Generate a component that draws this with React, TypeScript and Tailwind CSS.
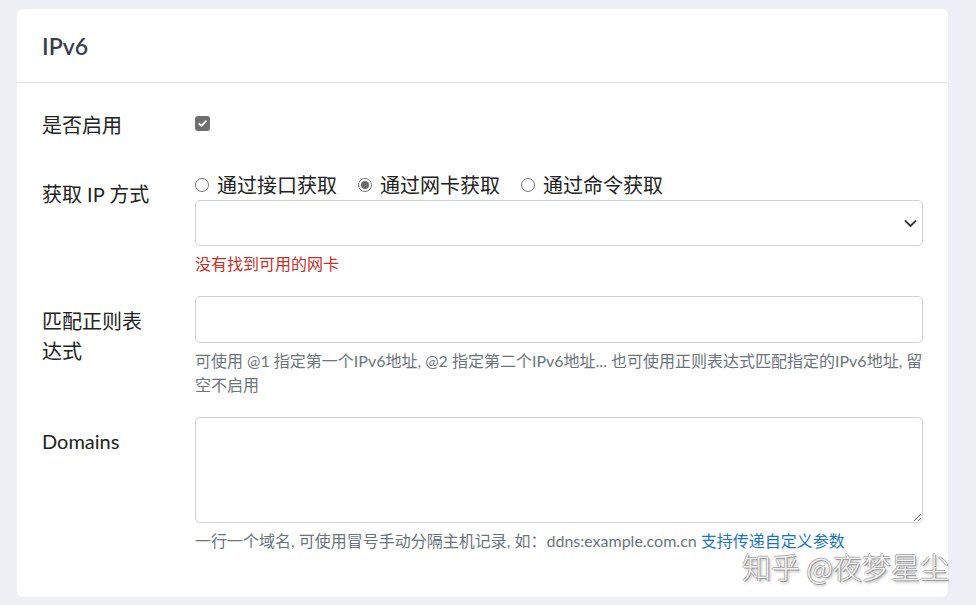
import React from "react";

const FONT = "font-['Lato','Noto_Sans_CJK_SC',sans-serif]";

function Radio({ checked, label }: { checked?: boolean; label: string }) {
  return (
    <label className="flex items-center gap-[8px]">
      <span className="w-[14px] h-[14px] rounded-full border border-[#777] bg-white flex items-center justify-center">
        {checked && <span className="w-[8px] h-[8px] rounded-full bg-[#6b6b6b]" />}
      </span>
      <span className="text-[20px] leading-[24px] text-[#222]">{label}</span>
    </label>
  );
}

export default function App() {
  return (
    <div className={`min-h-[605px] w-[976px] bg-[#eef0f5] pt-[9px] pl-[17px] relative overflow-hidden ${FONT}`}>
      <div className="w-[931px] bg-white rounded-[6px]">
        <div className="h-[74px] flex items-center px-[25px] border-b border-[#e5e6ea]">
          <h2 className="text-[23px] font-semibold text-[#3a3e4f] leading-none mt-[2px]">IPv6</h2>
        </div>
        <div className="px-[25px] pt-[27px] pb-[44px] flex flex-col">
          {/* Row 1 */}
          <div className="flex">
            <div className="w-[153px] text-[20px] leading-[30px] text-[#222]">是否启用</div>
            <div className="pt-[6px]">
              <span className="w-[15px] h-[15px] rounded-[3px] bg-[#6f6f6f] flex items-center justify-center">
                <svg width="11" height="11" viewBox="0 0 12 12">
                  <path d="M2.5 6.3 L5 8.7 L9.7 3.5" stroke="white" strokeWidth="2" fill="none" strokeLinecap="round" strokeLinejoin="round" />
                </svg>
              </span>
            </div>
          </div>
          {/* Row 2 */}
          <div className="flex mt-[33px]">
            <div className="w-[153px] pt-[6px] text-[20px] leading-[30px] text-[#222]">获取 IP 方式</div>
            <div className="flex-1 flex flex-col">
              <div className="flex items-center gap-[21px] h-[24px]">
                <Radio label="通过接口获取" />
                <Radio checked label="通过网卡获取" />
                <Radio label="通过命令获取" />
              </div>
              <div className="mt-[3px] h-[46px] border border-[#cfd1d4] rounded-[5px] flex items-center justify-end pr-[5px]">
                <svg width="13" height="9" viewBox="0 0 13 9">
                  <path d="M1.5 2 L6.5 7 L11.5 2" stroke="#343a40" strokeWidth="1.8" fill="none" strokeLinecap="round" strokeLinejoin="round" />
                </svg>
              </div>
              <div className="mt-[6px] text-[16px] leading-[24px] text-[#c4302b]">没有找到可用的网卡</div>
            </div>
          </div>
          {/* Row 3 */}
          <div className="flex mt-[20px]">
            <div className="w-[153px] pt-[10px] pr-[40px] text-[20px] leading-[30px] text-[#222]">匹配正则表达式</div>
            <div className="flex-1 flex flex-col">
              <input className="h-[47px] border border-[#cfd1d4] rounded-[5px] outline-none" />
              <div className="mt-[6px] text-[16px] leading-[24px] text-[#6c757d]">
                可使用 @1 指定第一个IPv6地址, @2 指定第二个IPv6地址... 也可使用正则表达式匹配指定的IPv6地址, 留
                <br />
                空不启用
              </div>
            </div>
          </div>
          {/* Row 4 */}
          <div className="flex mt-[20px]">
            <div className="w-[153px] pt-[9px] text-[20px] leading-[30px] text-[#222]">Domains</div>
            <div className="flex-1 flex flex-col">
              <textarea className="h-[106px] border border-[#cfd1d4] rounded-[5px] outline-none resize-y block" />
              <div className="mt-[6px] text-[16px] leading-[24px] text-[#6c757d] whitespace-nowrap">
                一行一个域名, 可使用冒号手动分隔主机记录, 如：ddns:example.com.cn{" "}
                <a className="text-[#1a76bd]">支持传递自定义参数</a>
              </div>
            </div>
          </div>
        </div>
      </div>
      <div className="absolute left-[742px] top-[552px] text-[29px] leading-[28px] font-light text-[#f2f2f2] font-['Noto_Sans_CJK_SC',sans-serif] [text-shadow:1px_1px_0_#9a9a9a,-1px_0_0_#b0b0b0,0_-1px_0_#b0b0b0,2px_2px_3px_rgba(0,0,0,0.35)] whitespace-nowrap">
        知乎 @夜梦星尘
      </div>
    </div>
  );
}
